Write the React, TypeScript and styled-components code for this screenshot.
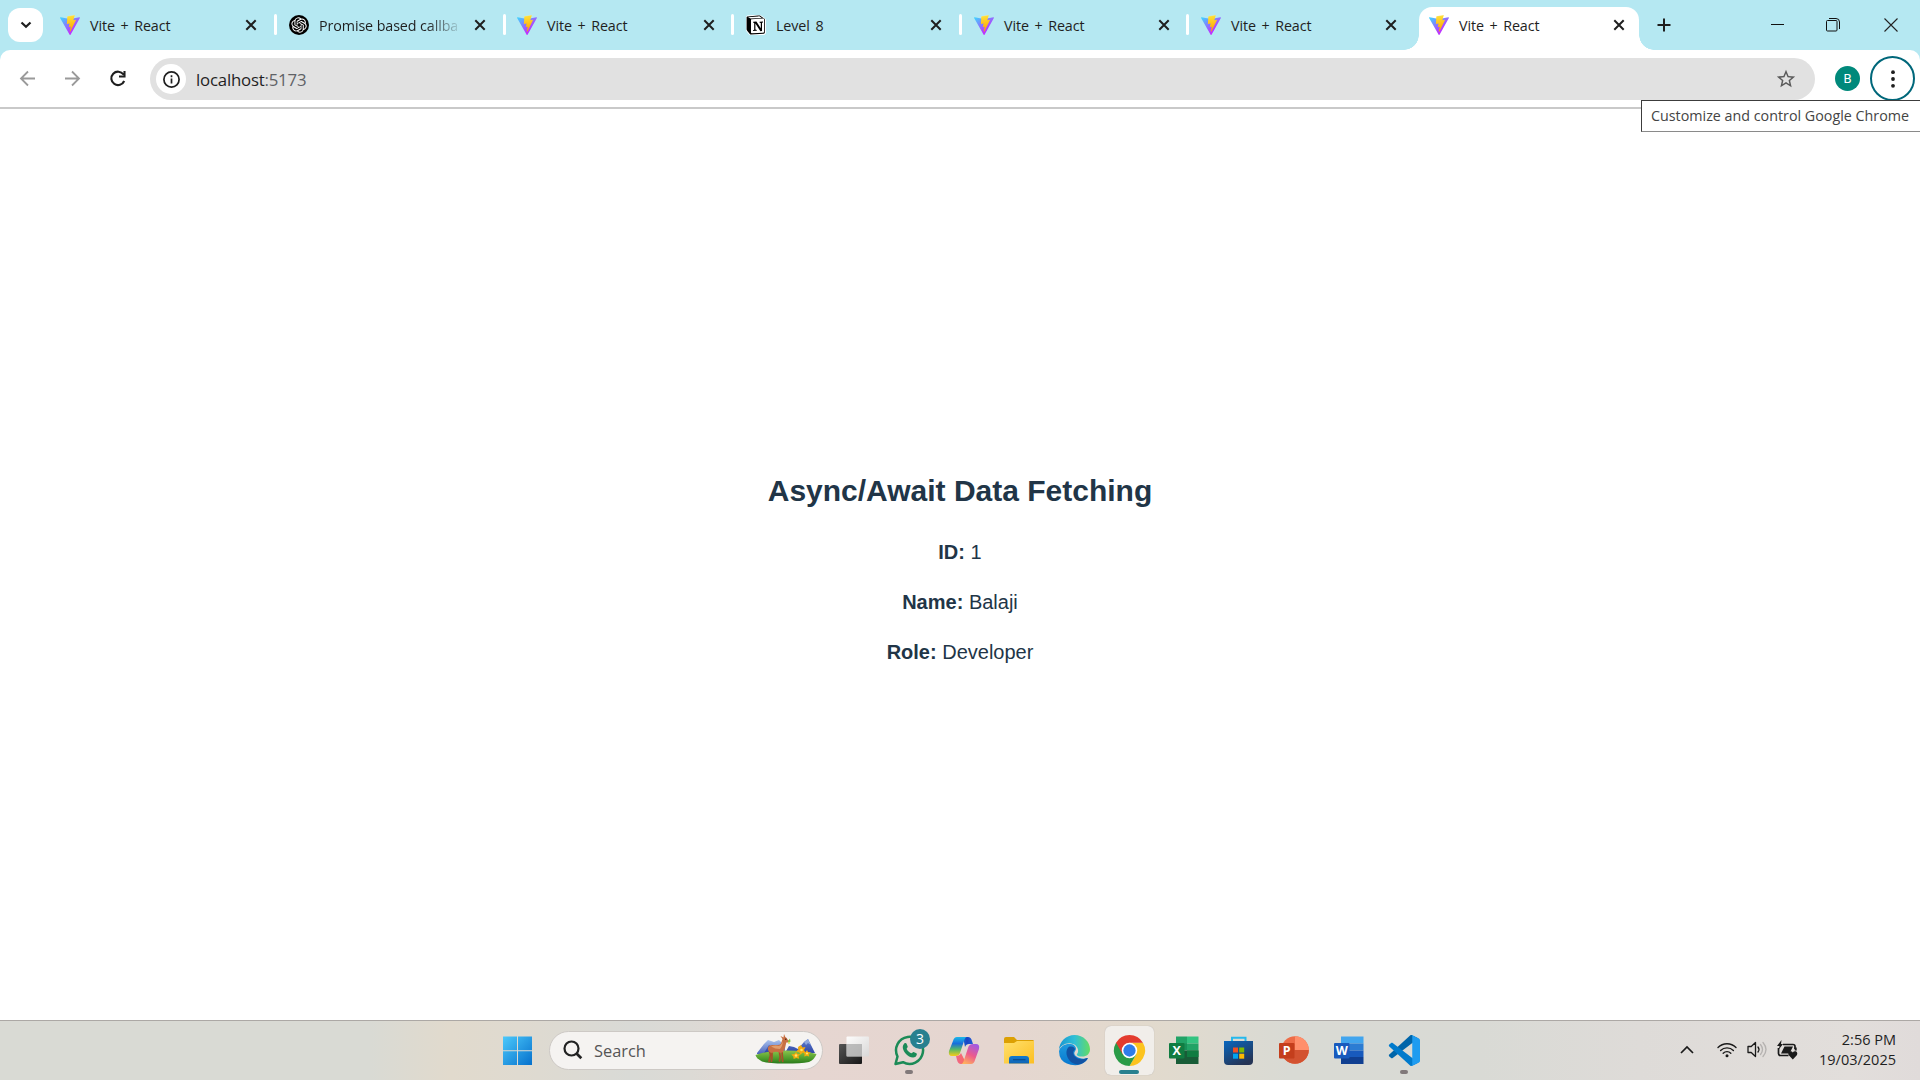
import React from "react";
import styled, { createGlobalStyle, css } from "styled-components";

const Global = createGlobalStyle`
  * { box-sizing: border-box; }
  body { margin: 0; background: #fff; overflow: hidden; }
`;

const Screen = styled.div`
  width: 1920px;
  height: 1080px;
  display: flex;
  flex-direction: column;
  background: #fff;
  font-family: "Open Sans", "Noto Sans", sans-serif;
  color: #1f1f1f;
`;

/* ---------- tab strip ---------- */
const TabStrip = styled.header`
  height: 50px;
  flex: none;
  display: flex;
  align-items: stretch;
  background: #b5e8f2;
`;
const TabSearch = styled.button`
  width: 35px;
  height: 34px;
  margin: 8px 8px 0 8px;
  padding: 0;
  border: 0;
  border-radius: 12px;
  background: #fff;
  display: grid;
  place-items: center;
`;
const Tab = styled.div<{ $active?: boolean; $width: number; $inset: number }>`
  position: relative;
  flex: none;
  width: ${(p) => p.$width}px;
  margin-top: 7px;
  padding: 0 0 0 ${(p) => p.$inset}px;
  display: flex;
  align-items: flex-start;
  ${(p) =>
    p.$active &&
    css`
      background: #fff;
      border-radius: 13px 13px 0 0;
      &::before,
      &::after {
        content: "";
        position: absolute;
        bottom: 0;
        width: 15px;
        height: 15px;
      }
      &::before {
        left: -15px;
        background: radial-gradient(circle at 0 0, #b5e8f2 14.5px, #fff 15px);
      }
      &::after {
        right: -15px;
        background: radial-gradient(circle at 100% 0, #b5e8f2 14.5px, #fff 15px);
      }
    `}
`;
const Favicon = styled.span`
  width: 20px;
  height: 20px;
  margin-top: 8px;
  flex: none;
  svg { display: block; }
`;
const TabTitle = styled.span<{ $fade?: boolean }>`
  width: 145px;
  flex: none;
  margin-left: 10px;
  margin-top: 8px;
  white-space: nowrap;
  font-size: 14.3px;
  line-height: 21px;
  letter-spacing: -0.1px;
  word-spacing: ${(p) => (p.$fade ? 0 : 2)}px;
  ${(p) => p.$fade && css`mask-image: linear-gradient(90deg, #000 108px, transparent 144px);`}
`;
const TabClose = styled.span<{ $gap: number }>`
  margin: 12px 0 0 ${(p) => p.$gap}px;
  height: 12px;
  svg { display: block; }
`;
const Separator = styled.i<{ $hidden?: boolean }>`
  width: 3px;
  height: 21px;
  margin: 14px 0 0 0;
  flex: none;
  border-radius: 2px;
  background: ${(p) => (p.$hidden ? "transparent" : "#fff")};
`;
const NewTab = styled.div`
  width: 48px;
  padding: 18px 0 0 18px;
  svg { display: block; }
`;
const WindowButtons = styled.div`
  margin-left: auto;
  display: flex;
  svg { display: block; }
`;
const WindowButton = styled.div<{ $width: number; $shift?: number }>`
  width: ${(p) => p.$width}px;
  height: 50px;
  padding-right: ${(p) => p.$shift ?? 0}px;
  display: grid;
  place-items: center;
`;

/* ---------- toolbar ---------- */
const ToolbarBack = styled.div`
  flex: none;
  height: 59px;
  background: linear-gradient(#b5e8f2 12px, #fff 12px);
`;
const Toolbar = styled.div`
  height: 59px;
  display: flex;
  align-items: flex-start;
  background: #fff;
  border-bottom: 2px solid #c9c9c9;
  border-radius: 10px 10px 0 0;
  position: relative;
`;
const NavButton = styled.div<{ $left: number }>`
  margin: 18px 0 0 ${(p) => p.$left}px;
  width: 20px;
  height: 20px;
  svg { display: block; }
`;
const Omnibox = styled.div`
  width: 1665px;
  height: 42px;
  margin: 8px 0 0 22px;
  padding: 0 18px 0 6px;
  border-radius: 21px;
  background: #e1e1e1;
  display: flex;
  align-items: center;
`;
const SiteInfo = styled.span`
  width: 30px;
  height: 30px;
  border-radius: 50%;
  background: #fff;
  display: grid;
  place-items: center;
`;
const Address = styled.span`
  flex: 1;
  margin-left: 10px;
  padding-top: 1px;
  font-size: 16.8px;
  line-height: 24px;
  letter-spacing: -0.2px;
  span { color: #5f6266; }
`;
const Avatar = styled.span`
  width: 25px;
  height: 25px;
  margin: 16px 0 0 20px;
  border-radius: 50%;
  background: #00897b;
  color: #fff;
  font: 13px/25px Roboto, sans-serif;
  text-align: center;
`;
const MenuButton = styled.span`
  width: 45px;
  height: 45px;
  margin: 6px 0 0 10px;
  border: 2px solid #00677a;
  border-radius: 50%;
  display: grid;
  place-items: center;
`;
const Tooltip = styled.div`
  position: absolute;
  z-index: 2;
  top: 50px;
  right: 0;
  width: 279px;
  height: 32px;
  padding-left: 9px;
  border: 1px solid #3c3c3c;
  border-right: 0;
  border-bottom-color: #8a8a8a;
  background: #fff;
  font-size: 14.3px;
  line-height: 29px;
  white-space: nowrap;
  color: #444;
`;

/* ---------- page ---------- */
const Page = styled.main`
  flex: 1;
  padding-top: 361px;
  text-align: center;
  font-family: "Liberation Sans", Arial, sans-serif;
  font-size: 20px;
  line-height: 30px;
  color: #213547;
`;
const Heading = styled.h2`
  margin: 0 0 25px;
  font-size: 30px;
  line-height: 42px;
`;
const Field = styled.p`
  margin: 0 0 20px;
`;

/* ---------- taskbar ---------- */
const Taskbar = styled.footer`
  height: 60px;
  flex: none;
  display: flex;
  align-items: center;
  border-top: 1px solid #aca8a5;
  background: linear-gradient(90deg, #d9dad4 0, #d9dad4 370px, #e1dacd 450px, #dfdad0 520px, #d9dad6 630px, #dcdad5 690px, #e6d6d1 800px, #e5d6d0 1000px, #e2dacd 1150px, #d9dad4 1290px, #d9dad5 1480px, #dedbd8 1640px, #e2dedb 1850px, #e0dbda 1920px);
`;
const StartButton = styled.div`
  width: 30px;
  height: 30px;
  margin-left: 503px;
  margin-bottom: 1px;
  svg { display: block; }
`;
const SearchBox = styled.div`
  width: 274px;
  height: 39px;
  margin: 0 0 1px 16px;
  padding: 0 5px 0 13px;
  display: flex;
  align-items: center;
  border: 1px solid #cdc9c5;
  border-radius: 20px;
  background: #f5f3f1;
  font-size: 16.4px;
  color: #555;
`;
const SearchLabel = styled.span`
  flex: 1;
  margin-left: 11px;
  padding-top: 1px;
  line-height: 22px;
`;
const Apps = styled.div`
  display: flex;
  margin: 0 0 1px 4px;
`;
const AppSlot = styled.div<{ $active?: boolean }>`
  position: relative;
  width: 49px;
  height: 49px;
  margin: 0 3px;
  padding: 9px;
  border-radius: 6px;
  ${(p) => p.$active && css`background: #f1eeea; box-shadow: 0 0 1px #aaa;`}
  svg { display: block; overflow: visible; }
`;
const Running = styled.i<{ $active?: boolean }>`
  position: absolute;
  bottom: 1px;
  left: ${(p) => (p.$active ? 14 : 20)}px;
  width: ${(p) => (p.$active ? 20 : 8)}px;
  height: 4px;
  border-radius: 2px;
  background: ${(p) => (p.$active ? "#28808f" : "#81797a")};
`;
const Badge = styled.span`
  position: absolute;
  top: 3px;
  left: 25px;
  width: 20px;
  height: 20px;
  border-radius: 50%;
  background: #28808f;
  color: #fff;
  font-size: 14px;
  line-height: 20px;
  text-align: center;
`;
const Tray = styled.div`
  margin: 0 0 2px auto;
  display: flex;
  align-items: center;
  svg { display: block; }
`;
const TrayIcon = styled.span<{ $gap: number }>`
  margin-left: ${(p) => p.$gap}px;
`;
const Clock = styled.div`
  width: 121px;
  padding-right: 24px;
  text-align: right;
  font-size: 14.5px;
  line-height: 20px;
  white-space: nowrap;
`;

/* ---------- icons ---------- */
const Vite = () => (
  <svg width="20" height="20" viewBox="0 0 256 257">
    <defs>
      <linearGradient id="v1" x1="-.8%" x2="57.6%" y1="7.6%" y2="78.4%">
        <stop offset="0" stopColor="#41D1FF" /><stop offset="1" stopColor="#BD34FE" />
      </linearGradient>
      <linearGradient id="v2" x1="43.4%" x2="50.3%" y1="2.2%" y2="89%">
        <stop offset="0" stopColor="#FFEA83" /><stop offset=".083" stopColor="#FFDD35" /><stop offset="1" stopColor="#FFA800" />
      </linearGradient>
    </defs>
    <path fill="url(#v1)" d="M255.153 37.938 134.897 252.976c-2.483 4.44-8.862 4.466-11.382.048L.875 37.958c-2.746-4.814 1.371-10.646 6.827-9.67l120.385 21.517a6.537 6.537 0 0 0 2.322-.004l117.867-21.483c5.438-.991 9.574 4.796 6.877 9.62Z" />
    <path fill="url(#v2)" d="M185.432.063 96.44 17.501a3.268 3.268 0 0 0-2.634 3.014l-5.474 92.456a3.268 3.268 0 0 0 3.997 3.378l24.777-5.718c2.318-.535 4.413 1.507 3.936 3.838l-7.361 36.047c-.495 2.426 1.782 4.5 4.151 3.78l15.304-4.649c2.372-.72 4.652 1.36 4.15 3.788l-11.698 56.621c-.732 3.542 3.979 5.473 5.943 2.437l1.313-2.028 72.516-144.72c1.215-2.423-.88-5.186-3.54-4.672l-25.505 4.922c-2.396.462-4.435-1.77-3.759-4.114l16.646-57.705c.677-2.35-1.37-4.583-3.769-4.113Z" />
  </svg>
);
const ChatGpt = () => (
  <svg width="20" height="20" viewBox="0 0 20 20">
    <circle cx="10" cy="10" r="10" fill="#000" />
    <g transform="translate(2.400 2.300) scale(.64)">
      <path fill="#fff" d="M22.282 9.821a5.985 5.985 0 0 0-.516-4.91 6.046 6.046 0 0 0-6.51-2.9A6.065 6.065 0 0 0 4.981 4.18a5.985 5.985 0 0 0-3.998 2.9 6.046 6.046 0 0 0 .743 7.097 5.98 5.98 0 0 0 .51 4.911 6.051 6.051 0 0 0 6.515 2.9A5.985 5.985 0 0 0 13.26 24a6.056 6.056 0 0 0 5.772-4.206 5.99 5.99 0 0 0 3.997-2.9 6.056 6.056 0 0 0-.747-7.073zM13.26 22.43a4.476 4.476 0 0 1-2.876-1.04l.141-.081 4.779-2.758a.795.795 0 0 0 .392-.681v-6.737l2.02 1.168a.071.071 0 0 1 .038.052v5.583a4.504 4.504 0 0 1-4.494 4.494zM3.6 18.304a4.47 4.47 0 0 1-.535-3.014l.142.085 4.783 2.759a.771.771 0 0 0 .78 0l5.843-3.369v2.332a.08.08 0 0 1-.033.062L9.74 19.95a4.5 4.5 0 0 1-6.14-1.646zM2.34 7.896a4.485 4.485 0 0 1 2.366-1.973V11.6a.766.766 0 0 0 .388.676l5.815 3.355-2.02 1.168a.076.076 0 0 1-.071 0l-4.83-2.786A4.504 4.504 0 0 1 2.34 7.872zm16.597 3.855l-5.833-3.387L15.119 7.2a.076.076 0 0 1 .071 0l4.83 2.791a4.494 4.494 0 0 1-.676 8.105v-5.678a.79.79 0 0 0-.407-.667zm2.01-3.023l-.141-.085-4.774-2.782a.776.776 0 0 0-.785 0L9.409 9.23V6.897a.066.066 0 0 1 .028-.061l4.83-2.787a4.5 4.5 0 0 1 6.68 4.66zm-12.64 4.135l-2.02-1.164a.08.08 0 0 1-.038-.057V6.075a4.5 4.5 0 0 1 7.375-3.453l-.142.08L8.704 5.46a.795.795 0 0 0-.393.681zm1.097-2.365l2.602-1.5 2.607 1.5v2.999l-2.597 1.5-2.607-1.5z" />
    </g>
  </svg>
);
const Notion = () => (
  <svg width="20" height="20" viewBox="0 0 100 100">
    <path fill="#fff" stroke="#fff" strokeWidth="5" d="M6 5 61 1c7-.6 9 0 13 3l19 13c3 2 4 3 4 6v67c0 4-2 7-7 7l-64 4c-4 .2-6 0-8-3L4 80c-2-3-3-5-3-8V11c0-3 2-6 5-6Z" />
    <path fill="#000" d="M61 3 8 7C4 7.400 3 9 3 12v59c0 3 1 5 3 8l13 16c2 3 4 3 7 3l62-4c5-.3 6-3 6-6V23c0-2-1-3-3-5L73 5c-4-3-6-3-12-2ZM27 21 86 17.500c3-.2 4 1 4 3V84c0 3-1 4-4 4.200L29 91.500c-3 .2-4-1-4-4V25c0-2 1-4 2-4ZM10 11l51-4c5-.4 6 0 9 2l9 6-56 3-13-7Z" fillRule="evenodd" />
    <path fill="#000" d="M36 34 52 33 74 66V40l-6-1v-5l17-1v4l-5 2v41l-8 1-25-38v30l7 2v4l-19 1v-4l6-2V40l-5-1Z" />
  </svg>
);
const Cross = () => (
  <svg width="12" height="12" viewBox="0 0 12 12"><path d="M1.300 1.300 10.700 10.700M10.700 1.300 1.300 10.700" stroke="#1f1f1f" strokeWidth="2" /></svg>
);
const Deer = () => (
  <svg width="62" height="34" viewBox="0 0 62 34">
    <defs>
      <linearGradient id="d1" x2="0" y2="1"><stop stopColor="#a9c2ec" /><stop offset="1" stopColor="#4a62bb" /></linearGradient>
      <linearGradient id="d2" x2="0" y2="1"><stop stopColor="#5f7fcf" /><stop offset="1" stopColor="#2f46a6" /></linearGradient>
      <linearGradient id="d3" x2="0" y2="1"><stop stopColor="#8bc44c" /><stop offset=".6" stopColor="#4f9e2d" /><stop offset="1" stopColor="#2a7a1b" /></linearGradient>
    </defs>
    <path d="M2 20 9 11l4-4 6 2 5-2 6 6v8H2Z" fill="url(#d1)" />
    <path d="m9 20 5-8 4 3 4-2 5 7ZM30 20l4-7 5 1 4 2 6-7 4-3 7 14Z" fill="url(#d2)" />
    <path d="m49 9 4-3 3 6-3-2-2 2Z" fill="#8fa7dd" />
    <path d="M.5 22Q12 17.500 31 17.500T61.500 21Q60 26 54 29q-8 1.500-24 1.500T7 28.500Q1 25 .5 22Z" fill="url(#d3)" />
    <g stroke="#a94f2a" strokeWidth="1.700" strokeLinecap="round" fill="none">
      <path d="M14.500 18 15.500 22 14 28.500M17 19v5l-.5 4.500M24.500 19l.7 5-.7 4M27 18l.3 5 .4 5.500" />
    </g>
    <path d="M13 17q-1-4.500 4-5h6q3 0 3.500-3L27.500 6l-2-3 3 1.500L29 1l1.300 3q1.700.5 2.200 2.500l1.800 1.500q0 1.500-3 1.500-.8 6-3.300 9.500-2 1.500-5 0-3-1-6 1-2.500 0-4-3Z" fill="#c87043" />
    <path d="M16 13.500q4-1.500 8-.5 3.500-2 4-6-.2 6-3 9-5 0-9-2.500Z" fill="#e5a473" opacity=".85" />
    <circle cx="30.800" cy="6.300" r=".7" fill="#32150f" />
    <path d="m33 8 2-2.500.5 3-2 2Z" fill="#86c440" /><circle cx="34" cy="10" r="1" fill="#f4df63" />
    <g fill="#f2a90f"><path d="m46 12 1.500 2.500 3-.5-1.500 3 1.500 2.500-3 .2-2 2-1.200-2.500-3.300-.7 2.300-2-.3-2.500Z" /><path d="m41 19 1.500 2 3 .2-2 2 .7 2.500-3-.7-2.500 1-.4-2.600-2-2 3-.3Z" /><path d="m52 17 1 2 2.800.5-2 1.700.4 2.400-2.500-.8-2.400.8.3-2.500-1.600-1.800 2.600-.2Z" /></g>
    <g fill="#ffe566"><circle cx="46.500" cy="17" r="1.300" /><circle cx="41" cy="22.500" r="1.300" /><circle cx="52" cy="20.500" r="1.100" /></g>
  </svg>
);
const TaskView = () => (
  <svg width="31" height="31" viewBox="0 0 31 31">
    <defs><linearGradient id="tv" x2="1" y2="1"><stop stopColor="#555" /><stop offset="1" stopColor="#171717" /></linearGradient>
    <linearGradient id="tw" x2="1" y2="1"><stop stopColor="#fff" /><stop offset="1" stopColor="#d8d8d8" /></linearGradient></defs>
    <rect x="0" y="9" width="23" height="20" rx="1" fill="url(#tv)" />
    <rect x="7.500" y="1.500" width="22.500" height="20" rx="1" fill="url(#tw)" opacity=".93" />
    <path d="M7.500 9H23v12.500H7.500Z" fill="#a5a5a5" opacity=".65" />
  </svg>
);
const WhatsApp = () => (
  <svg width="31" height="31" viewBox="0 0 31 31" fill="none">
    <path d="M1.500 29 3.500 21.500A13.500 13.500 0 1 1 9 27.200Z" stroke="#1c8b57" strokeWidth="2.500" strokeLinejoin="round" />
    <path d="M10.300 8.500c.8-.8 2-.5 2.300.3l1.100 2.600c.3.800-1.300 1.900-1 2.500 1 2 2.500 3.400 4.500 4.300.7.300 1.600-1.500 2.400-1.200l2.800 1.300c1 .5.300 2.600-.8 3.400-3.100 2.100-7.500-.6-9.600-2.800-2.800-3-4.700-7.400-1.700-10.400Z" fill="#1c8b57" />
  </svg>
);
const Copilot = () => (
  <svg width="31" height="31" viewBox="0 0 31 31">
    <defs>
      <linearGradient id="c1" x2="0" y2="1"><stop stopColor="#1cb8e8" /><stop offset=".35" stopColor="#176ddb" /><stop offset=".65" stopColor="#54b868" /><stop offset="1" stopColor="#f8cd19" /></linearGradient>
      <linearGradient id="c2" x1=".7" x2=".2" y2="1"><stop stopColor="#a45ae0" /><stop offset=".5" stopColor="#ed5a8c" /><stop offset="1" stopColor="#ffb65b" /></linearGradient>
      <linearGradient id="c3" x2="1"><stop stopColor="#1599dd" /><stop offset=".6" stopColor="#1843c4" /><stop offset="1" stopColor="#2461d9" /></linearGradient>
      <linearGradient id="c4" x2="1"><stop stopColor="#ef668a" /><stop offset="1" stopColor="#ff7149" /></linearGradient>
    </defs>
    <path d="M9 2h10q3 0 4 4l1 3h-4q-3 0-4 3L14 2Z" fill="url(#c3)" />
    <path d="M8 2h10q-2 0-3 4l-4 12q-1 3-4 3H3q-4 0-3-5L4 6q1-4 4-4Z" fill="url(#c1)" />
    <path d="M22 29H12q-3 0-4-4l-1-4q4 0 5-3l5 10Z" fill="url(#c4)" />
    <path d="M22 29H12q2 0 3-4l4-12q1-4 5-4h3q4 0 3 5l-4 11q-1 4-4 4Z" fill="url(#c2)" />
  </svg>
);
const Folder = () => (
  <svg width="31" height="31" viewBox="0 0 31 31">
    <defs><linearGradient id="f" x2="1" y2="1"><stop stopColor="#ffe06d" /><stop offset="1" stopColor="#fcbf22" /></linearGradient>
    <linearGradient id="fb" x2="0" y2="1"><stop stopColor="#0f7ad0" /><stop offset="1" stopColor="#1265b4" /></linearGradient></defs>
    <path d="M0 4q0-2 2-2h8l3 3h16q1 0 1 2v5H0Z" fill="#dca003" />
    <path d="M0 8h10l3-2h17v22.500H0Z" fill="url(#f)" />
    <path d="M5 28.500V24q0-3 3-3h14q3 0 3 3v4.500Z" fill="url(#fb)" />
    <path d="M9 24.700h12.500" stroke="#0b4b8d" strokeWidth="1.200" />
  </svg>
);
const Edge = () => (
  <svg width="31" height="31" viewBox="0 0 24 24">
    <defs><linearGradient id="e1" y1=".3" x2="1" y2=".3"><stop stopColor="#1997d2" /><stop offset=".5" stopColor="#30bfd6" /><stop offset="1" stopColor="#65dc63" /></linearGradient>
    <linearGradient id="e2" x2="0" y2="1"><stop stopColor="#1f9bde" /><stop offset="1" stopColor="#0877cf" /></linearGradient></defs>
    <path d="M21.860 17.860q.140 0 .250.120.100.130.100.250t-.110.330l-.320.460-.430.530-.440.500q-.260.290-.460.490-1.500 1.400-3.600 2.100-2.100.800-4.300.800Q5 23 1.800 19 0 16 0 12.500c1-4 5-6 9-5.500 4 .3 5 4 3.500 5.300-1 1.200-1 3 1 4.400 2.300 1.600 5.400 2.100 8.360 1.160Z" fill="url(#e2)" />
    <path d="M8 9C6 10 5.200 13 6.300 16.500c1.500 4.600 6 7.200 10.300 6 2.200-.7 4.200-2.200 5.500-4.200.2-.4 0-.6-.4-.4-3.900 1.800-7.600.8-9.400-1.200-2-2.400-1.300-4.600 0-5.300.2-1.700-1.500-3-4.300-2.400Z" fill="#1253a4" />
    <path d="M0 11.500C.3 5 5.500 0 12 0c7 0 12 5.400 12 11 0 3.600-2.600 5.700-6 5.700-2.600 0-4.500-.8-4.200-1.600.2-.7 1-1 1-2.900 0-3-2.800-5.800-6.800-5.800C3.900 6.400 1 8.700 0 11.500Z" fill="url(#e1)" />
  </svg>
);
const Chrome = () => (
  <svg width="31" height="31" viewBox="0 0 48 48">
    <path d="M44.800 12A24 24 0 0 1 24 48L34.400 30 24 12Z" fill="#fcc31e" />
    <path d="M3.200 12A24 24 0 0 0 24 48L34.400 30 24 24V12Z" fill="#2a9b47" />
    <path d="M24 12H44.800A24 24 0 0 0 3.200 12L13.600 30 24 24Z" fill="#e33b2e" />
    <circle cx="24" cy="24" r="12" fill="#fff" /><circle cx="24" cy="24" r="9.500" fill="#2f7ce9" />
  </svg>
);
const OfficeText = styled.text`
  font: 700 12.5px "Open Sans", sans-serif;
  fill: #fff;
  text-anchor: middle;
`;
const Excel = () => (
  <svg width="31" height="31" viewBox="0 0 31 31">
    <path d="M7 1.500h11v9H7Z" fill="#21a366" /><path d="M18 1.500h11.500v7H18Z" fill="#33c481" />
    <path d="M7 8.500h11v7H7Z" fill="#189058" /><path d="M18 8.500h11.500v7H18Z" fill="#21a366" />
    <path d="M7 15.500h22.500V29H7Z" fill="#185c37" /><path d="M18 15.500h11.500V22H18Z" fill="#107c41" />
    <rect y="8" width="15.500" height="15.500" rx="1" fill="#107c41" /><OfficeText x="7.700" y="20.200">X</OfficeText>
  </svg>
);
const Store = () => (
  <svg width="31" height="31" viewBox="0 0 31 31">
    <defs><linearGradient id="st" x2=".6" y2="1"><stop stopColor="#0867bf" /><stop offset="1" stopColor="#253455" /></linearGradient></defs>
    <path d="M8 7V2.800h13.500V7" fill="none" stroke="#25b9ed" strokeWidth="2" />
    <path d="M0 6h29v20q0 4-4 4H4q-4 0-4-4Z" fill="url(#st)" />
    <path d="M9 12.500h5v5H9Z" fill="#f25022" /><path d="M15.200 12.500h5v5h-5Z" fill="#7fba00" /><path d="M9 18.700h5v5H9Z" fill="#00a4ef" /><path d="M15.200 18.700h5v5h-5Z" fill="#ffb900" />
  </svg>
);
const PowerPoint = () => (
  <svg width="31" height="31" viewBox="0 0 31 31">
    <circle cx="16" cy="15" r="13.800" fill="#ed6c47" /><path d="M16 1.200A13.800 13.800 0 0 1 29.800 15H16Z" fill="#ff8f6b" /><path d="M2.200 15h27.600a13.800 13.800 0 0 1-27.600 0Z" fill="#d35230" />
    <rect y="8" width="15.500" height="15.500" rx="1" fill="#c43e1c" /><OfficeText x="7.700" y="20.200">P</OfficeText>
  </svg>
);
const Word = () => (
  <svg width="31" height="31" viewBox="0 0 31 31">
    <path d="M7 1.500h22.500v7H7Z" fill="#41a5ee" /><path d="M7 8.500h22.500v7H7Z" fill="#2b7cd3" /><path d="M7 15.500h22.500V22H7Z" fill="#185abd" /><path d="M7 22h22.500v7H7Z" fill="#103f91" />
    <rect y="8" width="15.500" height="15.500" rx="1" fill="#185abd" /><OfficeText x="7.700" y="20.200">W</OfficeText>
  </svg>
);
const VsCode = () => (
  <svg width="31" height="31" viewBox="0 0 100 100">
    <path d="M96 11 75 1c-2-1-5-1-7 1L1 63c-2 1-2 4 0 6l6 5c1 1 3 1 5 0L92 13c3-2 7 0 7 3Z" fill="#0065a9" />
    <path d="M96 89 75 99c-2 1-5 1-7-1L1 37c-2-1-2-4 0-6l6-5c1-1 3-1 5 0l80 61c3 2 7 0 7-3Z" fill="#007acc" />
    <path d="M75 99c-2 1-5 1-7-1 3 3 7 1 7-2V4c0-4-4-5-7-2 2-2 5-2 7-1l21 10c2 1 4 3 4 6v66c0 3-2 5-4 6Z" fill="#1f9cf0" />
  </svg>
);

const tabs = [
  { title: "Vite + React", icon: <Vite />, width: 223, inset: 9, gap: 10 },
  { title: "Promise based callba", icon: <ChatGpt />, width: 226, inset: 12, gap: 10, fade: true },
  { title: "Vite + React", icon: <Vite />, width: 225, inset: 11, gap: 10.5 },
  { title: "Level 8", icon: <Notion />, width: 225, inset: 12, gap: 9 },
  { title: "Vite + React", icon: <Vite />, width: 224, inset: 12, gap: 9 },
  { title: "Vite + React", icon: <Vite />, width: 227, inset: 12, gap: 9 },
  { title: "Vite + React", icon: <Vite />, width: 220, inset: 10, gap: 8.5, active: true },
];

const apps = [
  { icon: <TaskView /> },
  { icon: <WhatsApp />, badge: "3", running: true },
  { icon: <Copilot /> },
  { icon: <Folder /> },
  { icon: <Edge /> },
  { icon: <Chrome />, running: true, active: true },
  { icon: <Excel /> },
  { icon: <Store /> },
  { icon: <PowerPoint /> },
  { icon: <Word /> },
  { icon: <VsCode />, running: true },
];

const fields = [["ID", "1"], ["Name", "Balaji"], ["Role", "Developer"]];

export default function App() {
  return (
    <Screen>
      <Global />
      <TabStrip>
        <TabSearch>
          <svg width="12" height="8" viewBox="0 0 12 8"><path d="m1.500 1.500 4.500 4.300 4.500-4.300" fill="none" stroke="#1f1f1f" strokeWidth="2.200" /></svg>
        </TabSearch>
        {tabs.map((tab, i) => (
          <React.Fragment key={i}>
            <Tab $active={tab.active} $width={tab.width} $inset={tab.inset}>
              <Favicon>{tab.icon}</Favicon>
              <TabTitle $fade={tab.fade}>{tab.title}</TabTitle>
              <TabClose $gap={tab.gap}><Cross /></TabClose>
            </Tab>
            {i < 6 && <Separator $hidden={i === 5} />}
          </React.Fragment>
        ))}
        <NewTab>
          <svg width="14" height="14" viewBox="0 0 14 14"><path d="M7 .5v13M.5 7h13" stroke="#1f1f1f" strokeWidth="2" /></svg>
        </NewTab>
        <WindowButtons>
          <WindowButton $width={57}><svg width="13" height="14" viewBox="0 0 13 14"><path d="M0 6.500h13" stroke="#111" /></svg></WindowButton>
          <WindowButton $width={57} $shift={3}>
            <svg width="14" height="14" viewBox="0 0 14 14" fill="none" stroke="#111"><rect x=".5" y="2.500" width="10.500" height="10.500" rx="1" /><path d="M3 .5h7q3.500 0 3.500 3.500v7" /></svg>
          </WindowButton>
          <WindowButton $width={57} $shift={1}><svg width="14" height="14" viewBox="0 0 14 14"><path d="m.5.5 13 13M13.500.5l-13 13" stroke="#222" strokeWidth="1.100" /></svg></WindowButton>
        </WindowButtons>
      </TabStrip>
      <ToolbarBack>
        <Toolbar>
          <NavButton $left={18}><svg width="20" height="20" viewBox="0 0 20 20" fill="none" stroke="#9a9a9a" strokeWidth="1.800"><path d="M17 10.500H3.500M10 3.500l-7 7 7 7" /></svg></NavButton>
          <NavButton $left={25}><svg width="20" height="20" viewBox="0 0 20 20" fill="none" stroke="#9a9a9a" strokeWidth="1.800"><path d="M2 10.500h13.500M9 3.500l7 7-7 7" /></svg></NavButton>
          <NavButton $left={25}><svg width="20" height="20" viewBox="0 0 20 20" fill="none" stroke="#1f1f1f" strokeWidth="2.100"><path d="M16.200 13A6.700 6.700 0 1 1 15.500 6.500M16.500 3v5.500H11" /></svg></NavButton>
          <Omnibox>
            <SiteInfo>
              <svg width="17" height="17" viewBox="0 0 17 17" fill="none" stroke="#1f1f1f" strokeWidth="1.700"><circle cx="8.500" cy="8.500" r="7.600" /><path d="M8.500 7.500v5M8.500 4.300v2" /></svg>
            </SiteInfo>
            <Address>localhost<span>:5173</span></Address>
            <svg width="22" height="22" viewBox="0 0 24 24" fill="#5a5a5a"><path d="m22 9.240-7.190-.62L12 2 9.190 8.630 2 9.240l5.460 4.730L5.820 21 12 17.270 18.180 21l-1.630-7.030L22 9.240zM12 15.400l-3.760 2.270 1-4.280-3.320-2.880 4.380-.38L12 6.100l1.710 4.040 4.380.38-3.320 2.880 1 4.280L12 15.400z" /></svg>
          </Omnibox>
          <Avatar>B</Avatar>
          <MenuButton>
            <svg width="4" height="18" viewBox="0 0 4 18" fill="#1f1f1f"><circle cx="2" cy="2.200" r="1.900" /><circle cx="2" cy="9" r="1.900" /><circle cx="2" cy="15.800" r="1.900" /></svg>
          </MenuButton>
          <Tooltip>Customize and control Google Chrome</Tooltip>
        </Toolbar>
      </ToolbarBack>
      <Page>
        <Heading>Async/Await Data Fetching</Heading>
        {fields.map(([name, value]) => (
          <Field key={name}><strong>{name}:</strong> {value}</Field>
        ))}
      </Page>
      <Taskbar>
        <StartButton>
          <svg width="30" height="30" viewBox="0 0 30 30">
            <defs><linearGradient id="w" x2="1" y2="1"><stop stopColor="#4cc9fb" /><stop offset="1" stopColor="#0570cc" /></linearGradient></defs>
            <path d="M0 1.500h14v13.700H0ZM15 1.500h14v13.700H15ZM0 16.200h14V30H0ZM15 16.200h14V30H15Z" fill="url(#w)" />
          </svg>
        </StartButton>
        <SearchBox>
          <svg width="20" height="20" viewBox="0 0 20 20" fill="none" stroke="#222" strokeWidth="2.200"><circle cx="8.500" cy="8.500" r="7" /><path d="m13.300 13.300 5 5" strokeWidth="2.700" /></svg>
          <SearchLabel>Search</SearchLabel>
          <Deer />
        </SearchBox>
        <Apps>
          {apps.map((app, i) => (
            <AppSlot key={i} $active={app.active}>
              {app.icon}
              {app.badge && <Badge>{app.badge}</Badge>}
              {app.running && <Running $active={app.active} />}
            </AppSlot>
          ))}
        </Apps>
        <Tray>
          <TrayIcon $gap={0}><svg width="14" height="9" viewBox="0 0 14 9"><path d="m1 8 6-6 6 6" fill="none" stroke="#1a1a1a" strokeWidth="1.700" /></svg></TrayIcon>
          <TrayIcon $gap={23}>
            <svg width="20" height="16" viewBox="0 0 20 16" fill="none" stroke="#1a1a1a" strokeWidth="1.400" strokeLinecap="round"><path d="M1 5.500a12.700 12.700 0 0 1 18 0M3.600 8.500a9 9 0 0 1 12.800 0M6.200 11.200a5.400 5.400 0 0 1 7.600 0" /><circle cx="10" cy="13.700" r="1.500" fill="#1a1a1a" stroke="none" /></svg>
          </TrayIcon>
          <TrayIcon $gap={10}>
            <svg width="21" height="17" viewBox="0 0 21 17" fill="none" stroke="#1a1a1a" strokeWidth="1.300" strokeLinecap="round"><path d="M1 5.500h3.200L8.500 1.500v14L4.200 11.500H1Z" strokeLinejoin="round" /><path d="M11 6q2 2.500 0 5" /><path d="M13.500 3.500q4 5 0 10M16 1.500q6 7 0 14" stroke="#b5b2b0" /></svg>
          </TrayIcon>
          <TrayIcon $gap={9}>
            <svg width="22" height="20" viewBox="0 0 22 20"><path d="M6 4.500h10q2 0 2 2V9M1.500 8v5.500q0 2 2 2h8" fill="none" stroke="#1a1a1a" strokeWidth="1.700" /><path d="M7.500 6.500h8.500L12.500 13.500H4Z" fill="#1a1a1a" /><path d="M4.500 0 0 6h2.500l-.7 3.500L6 4H4Z" fill="#1a1a1a" /><path d="M18.700 7.500v3" stroke="#1a1a1a" strokeWidth="2" /><path d="m15.800 19.500-4-4.300c-1.300-1.900 0-4 1.800-4q1.400 0 2.200 1.300.8-1.300 2.200-1.300c1.800 0 3.100 2.100 1.800 4Z" fill="#1a1a1a" /></svg>
          </TrayIcon>
          <Clock>2:56 PM<br />19/03/2025</Clock>
        </Tray>
      </Taskbar>
    </Screen>
  );
}
